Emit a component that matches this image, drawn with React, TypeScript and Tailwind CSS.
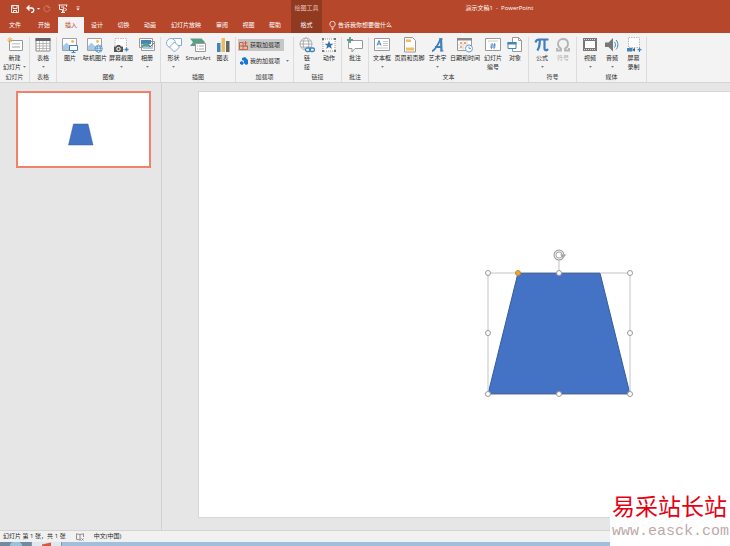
import { ReactNode } from "react"
import clsx from "clsx"

const tabs = [
    { name: "文件", width: "w-[30px]" },
    { name: "开始", width: "w-7" },
    { name: "插入", width: "w-[26px]", active: true },
    { name: "设计", width: "w-[26px]" },
    { name: "切换", width: "w-[27px]" },
    { name: "动画", width: "w-[26px]" },
    { name: "幻灯片放映", width: "w-[46px]" },
    { name: "审阅", width: "w-[26px]" },
    { name: "视图", width: "w-[27px]" },
    { name: "帮助", width: "w-[26px]" },
]

function Icon({ children }: { children: ReactNode }) {
    return (
        <svg viewBox="0 0 16 16" className="size-4 shrink-0" fill="none" aria-hidden="true">
            {children}
        </svg>
    )
}

function Caret() {
    return (
        <svg viewBox="0 0 3 2" className="w-[3px] h-0.5 shrink-0" aria-hidden="true">
            <path d="M0 0h3L1.5 1.8z" fill="#777" />
        </svg>
    )
}

interface ToolProps {
    icon: ReactNode
    lines: string[]
    width: string
    menu?: boolean
    disabled?: boolean
}

function Tool({ icon, lines, width, menu, disabled }: ToolProps) {
    return (
        <button
            type="button"
            disabled={disabled}
            className={clsx("flex flex-col items-center shrink-0 whitespace-nowrap", width, disabled ? "text-[#b1b1b1]" : "text-[#262626]")}
        >
            <Icon>{icon}</Icon>
            <span className="mt-px">{lines[0]}</span>
            <span className="flex items-center gap-0.5 h-2">
                {lines[1]}
                {menu && <Caret />}
            </span>
        </button>
    )
}

function Group({ label, width, children }: { label: string; width: string; children: ReactNode }) {
    return (
        <section className={clsx("flex flex-col shrink-0 border-r border-[#dcdcdc]", width)} aria-label={label}>
            <div className="flex shrink-0 h-9">{children}</div>
            <div className="text-center text-[#333]">{label}</div>
        </section>
    )
}

const picture = (
    <>
        <path d="M.5 1.5h14v12H.5z" fill="#fff" stroke="#a0a0a0" />
        <circle cx="10.5" cy="4.5" r="1.4" fill="#eebb55" />
        <path d="M1 13V9l3.5-3.5L9 10l1.5-1 3.5 4z" fill="#a9c8e4" />
    </>
)

const globe = (
    <>
        <circle cx="7" cy="7" r="6" />
        <ellipse cx="7" cy="7" rx="2.8" ry="6" />
        <path d="M1 7h12M2 4h10M2 10h10" />
    </>
)

function QuickAccess() {
    return (
        <div className="flex items-center gap-[7px] pl-[11px] w-[291px]">
            <button type="button" aria-label="保存">
                <svg viewBox="0 0 8 8" className="size-2" fill="none" stroke="#fff">
                    <path d="M.5.5h7v7h-7zM2 .5v3h4v-3M2.5 7.5v-2h3v2" strokeWidth=".9" />
                </svg>
            </button>
            <button type="button" aria-label="撤消">
                <svg viewBox="0 0 14 8" className="w-3.5 h-2" fill="none" stroke="#fff">
                    <path d="M3.5.5L1 3l2.5 2.5M1 3h4.5a2 2 0 0 1 0 4.5H5" strokeWidth="1.3" />
                    <path d="M11 3h3l-1.5 1.8z" fill="#fff" stroke="none" />
                </svg>
            </button>
            <button type="button" aria-label="重复" className="-ml-1">
                <svg viewBox="0 0 8 8" className="size-2" fill="none" stroke="#d07a68">
                    <path d="M5.5 1.2A3 3 0 1 0 7 4M5 .3v2.4h2.5" />
                </svg>
            </button>
            <button type="button" aria-label="从头开始">
                <svg viewBox="0 0 10 9" className="w-2.5 h-[9px]" fill="none" stroke="#fff">
                    <path d="M.5 1h9M1.5 1v4.5h3M8.5 1v2M3 8.5h4M4.5 5.5v3M3 3h3" strokeWidth=".9" />
                    <path d="M5.5 3.5l3.5 2-3.5 2z" fill="#b7472a" strokeWidth=".7" />
                </svg>
            </button>
            <button type="button" aria-label="自定义快速访问工具栏" className="pl-px">
                <svg viewBox="0 0 4 5" className="w-1 h-[5px]">
                    <path d="M.5.5h3v.8h-3zM.3 2.5h3.4L2 4.5z" fill="#fff" />
                </svg>
            </button>
        </div>
    )
}

function Header() {
    return (
        <header className="bg-[#b7472a] text-white">
            <div className="relative flex h-[17px]">
                <QuickAccess />
                <div className="flex items-center justify-center w-[31px] bg-[#903a22] text-[#efc4b8]">绘图工具</div>
                <h1 className="absolute left-[68%] top-1 -translate-x-1/2 pl-1.5 whitespace-nowrap">演示文稿1 &nbsp;- &nbsp;PowerPoint</h1>
            </div>
            <nav className="flex h-4">
                {tabs.map((tab) => (
                    <button
                        key={tab.name}
                        type="button"
                        className={clsx("shrink-0 whitespace-nowrap", tab.width, tab.active && "bg-[#f3f3f3] text-[#b7472a]")}
                    >
                        {tab.name}
                    </button>
                ))}
                <button type="button" className="shrink-0 w-[31px] ml-[3px] bg-[#903a22]">格式</button>
                <button type="button" className="flex items-center gap-0.5 ml-[7px] whitespace-nowrap">
                    <svg viewBox="0 0 7 9" className="w-[7px] h-[9px]" fill="none" stroke="#fff" strokeWidth=".8">
                        <path d="M2.3 6C2 5 .8 4.5.8 3a2.7 2.7 0 0 1 5.4 0c0 1.5-1.2 2-1.5 3zM2.5 7.3h2M2.8 8.5h1.4" />
                    </svg>
                    告诉我你想要做什么
                </button>
            </nav>
        </header>
    )
}

function Ribbon() {
    return (
        <div className="flex pt-1 bg-[#f3f3f3] border-b border-[#d4d4d4] overflow-hidden">
            <Group label="幻灯片" width="w-[30px]">
                <Tool width="w-[29px]" lines={["新建", "幻灯片"]} menu icon={
                    <>
                        <path d="M2.5 3.5h13v10h-13z" fill="#fff" stroke="#999" />
                        <path d="M5 6h8v1.5H5zM5 9h8v2H5z" fill="#d0d0d0" />
                        <path d="M3 0v6M0 3h6M1 1l4 4M5 1L1 5" stroke="#e8b04a" strokeWidth=".8" />
                    </>
                } />
            </Group>
            <Group label="表格" width="w-[27px]">
                <Tool width="w-[26px]" lines={["表格"]} menu icon={
                    <>
                        <path d="M1 1.5h14V14H1z" fill="#fff" stroke="#888" />
                        <path d="M.5 1h15v3H.5z" fill="#666" />
                        <path d="M1 6.5h14M1 9h14M1 11.5h14M4.5 4v10M8 4v10M11.5 4v10" stroke="#aaa" strokeWidth=".8" />
                    </>
                } />
            </Group>
            <Group label="图像" width="w-[104px]">
                <Tool width="w-[26px]" lines={["图片"]} icon={
                    <>
                        {picture}
                        <path d="M7.5 8.5h8v5h-8zM11.5 13.5v2M9.5 15.5h4" fill="#fff" stroke="#4285bd" />
                    </>
                } />
                <Tool width="w-6" lines={["联机图片"]} icon={
                    <>
                        {picture}
                        <g transform="translate(7.5 7.5) scale(.6)" stroke="#4285bd" strokeWidth="1.2" fill="#fff">{globe}</g>
                    </>
                } />
                <Tool width="w-7" lines={["屏幕截图"]} menu icon={
                    <>
                        <path d="M2 1.5h11.5v11H2z" fill="#fff" stroke="#bbb" strokeDasharray="1.5 1" />
                        <path d="M1 9.5h2L4 8h3l1 1.5h2V15H1z" fill="#555" />
                        <circle cx="5.5" cy="12" r="1.7" stroke="#fff" />
                        <path d="M13.5 10.5v4M11.5 12.5h4" stroke="#4285bd" strokeWidth="1.4" />
                    </>
                } />
                <Tool width="w-6" lines={["相册"]} menu icon={
                    <>
                        <path d="M.5 1.5h13v9H.5zM2.5 4.5h13v9h-13z" fill="#fff" stroke="#999" />
                        <path d="M2 3h10v4H2z" fill="#4285bd" />
                        <path d="M3 8l4-2.5L11 8l1 2H3z" fill="#5c9e85" />
                        <path d="M4 9.5h10V12H4z" fill="#a9c8e4" />
                        <path d="M9 8l2 2 4-4" stroke="#777" />
                    </>
                } />
            </Group>
            <Group label="插图" width="w-[75px]">
                <Tool width="w-[25px]" lines={["形状"]} menu icon={
                    <g fill="#fff" stroke="#84abd3">
                        <path d="M6.5 1.5h9v7h-9z" />
                        <circle cx="5" cy="6" r="4.5" />
                        <path d="M8.5 5l5 5-5 5-5-5z" />
                    </g>
                } />
                <Tool width="w-6" lines={["SmartArt"]} icon={
                    <>
                        <path d="M0 1.5h11.5L15 5l-3 4H0l3-3.7z" fill="#5c9e85" />
                        <path d="M5.5 6.5h10v8h-10z" fill="#fff" stroke="#999" />
                        <path d="M7 9h1M9 9h5M7 12h1M9 12h5" stroke="#aaa" />
                    </>
                } />
                <Tool width="w-[25px]" lines={["图表"]} icon={
                    <>
                        <path d="M2 6h3.5v9H2z" fill="#4285bd" />
                        <path d="M6.5 1H10v14H6.5z" fill="#e9bd62" />
                        <path d="M11 4h3.5v11H11z" fill="#666" />
                    </>
                } />
            </Group>
            <Group label="加载项" width="w-[58px]">
                <div className="flex flex-col items-start gap-1 pt-0.5 pl-0.5 text-[#262626] whitespace-nowrap">
                    <button type="button" className="flex items-center gap-0.5 w-[46px] h-3 pl-px bg-[#c6c6c6]">
                        <svg viewBox="0 0 9 9" className="size-[9px]" fill="none" stroke="#d65532" strokeWidth=".9">
                            <path d="M.5 1.5H4v7H.5zM.5 5h8M4 5h4.5v3.5H4M6.5 0v4M4.5 2h4" />
                        </svg>
                        获取加载项
                    </button>
                    <button type="button" className="flex items-center gap-0.5 h-3 pl-0.5">
                        <svg viewBox="0 0 8 8" className="size-2" fill="#1976d2">
                            <path d="M2 1l3-1 3 3v4L6 8 4 6V4L2 3z" />
                            <path d="M0 5l2-1 2 2-1.500 2L0 7z" />
                        </svg>
                        我的加载项
                        <span className="flex pl-1"><Caret /></span>
                    </button>
                </div>
            </Group>
            <Group label="链接" width="w-12">
                <Tool width="w-[26px]" lines={["链", "接"]} icon={
                    <>
                        <g stroke="#999" strokeWidth=".8" fill="#fff">{globe}</g>
                        <rect x="6.5" y="11" width="5" height="3.5" rx="1.7" stroke="#4285bd" strokeWidth="1.3" fill="#fff" />
                        <rect x="10.5" y="11" width="5" height="3.5" rx="1.7" stroke="#4285bd" strokeWidth="1.3" />
                    </>
                } />
                <Tool width="w-[18px]" lines={["动作"]} icon={
                    <>
                        <path d="M2 2h12v12H2z" fill="#fff" stroke="#999" strokeDasharray="1 1" />
                        <path d="M1 1h2v2H1zM13 1h2v2h-2zM1 13h2v2H1zM13 13h2v2h-2z" fill="#777" />
                        <path d="M8 3.5l1.2 3.2h3.3L9.9 8.8l1 3.2L8 10.1 5.1 12l1-3.200-2.600-2.100h3.300z" fill="#3672b0" />
                    </>
                } />
            </Group>
            <Group label="批注" width="w-[27px]">
                <Tool width="w-[26px]" lines={["批注"]} icon={
                    <>
                        <path d="M1.5 3.5h14v8H8L5 15v-3.5H1.5z" fill="#fff" stroke="#999" />
                        <path d="M3 0v6M0 3h6" stroke="#5c9e85" strokeWidth="1.8" />
                    </>
                } />
            </Group>
            <Group label="文本" width="w-40">
                <Tool width="w-[26px]" lines={["文本框"]} menu icon={
                    <>
                        <path d="M.5 1.5h15v12H.5z" fill="#fff" stroke="#999" />
                        <path d="M3 8.5l2-5 2 5M3.5 7h3" stroke="#4285bd" />
                        <path d="M9 4.5h5M9 6.5h5M9 8.5h5M2.5 11H14" stroke="#bbb" strokeWidth=".8" />
                    </>
                } />
                <Tool width="w-[29px]" lines={["页眉和页脚"]} icon={
                    <>
                        <path d="M2.5.5h8l3 3V15h-11z" fill="#fff" stroke="#999" />
                        <path d="M4 2.5h5V5H4zM4 10.5h8v3H4z" fill="#f0be5a" />
                    </>
                } />
                <Tool width="w-[27px]" lines={["艺术字"]} menu icon={
                    <>
                        <path d="M2 14c2.500 0 7-8 8.500-12" stroke="#3f7fbe" strokeWidth="1.8" />
                        <path d="M11 1.5L11.5 14M5 10h6.5" stroke="#3f7fbe" strokeWidth="2.2" />
                        <path d="M9 1.8h3.5M10 14h3.5" stroke="#3f7fbe" strokeWidth="1.2" />
                    </>
                } />
                <Tool width="w-7" lines={["日期和时间"]} icon={
                    <>
                        <path d="M.5 1.5h14v12H.5z" fill="#fff" stroke="#999" />
                        <path d="M0 1h15v2.5H0z" fill="#888" />
                        <path d="M3 5h2v2H3zM7 5h2v2H7zM3 9h2v2H3z" fill="#f0a070" />
                        <path d="M1 8h13M1 11h13M6 3v10M10 3v10" stroke="#ccc" strokeWidth=".7" />
                        <circle cx="12" cy="11.5" r="3.5" fill="#fff" stroke="#6ea0d2" />
                        <path d="M12 9.5v2h2" stroke="#6ea0d2" />
                    </>
                } />
                <Tool width="w-7" lines={["幻灯片", "编号"]} icon={
                    <>
                        <path d="M.5 1.5h15v12H.5z" fill="#fff" stroke="#999" />
                        <path d="M3 4h10" stroke="#ccc" />
                        <path d="M7.2 6l-.8 6M9.7 6l-.8 6M5.5 8H11M5 10h5.5" stroke="#3f7fbe" strokeWidth=".8" />
                    </>
                } />
                <Tool width="w-4" lines={["对象"]} icon={
                    <>
                        <path d="M5.5.5h6l3 3v11h-9z" fill="#fff" stroke="#999" />
                        <path d="M11.5.5v3h3" stroke="#999" />
                        <path d="M1 5.5h8v6H1z" fill="#fff" stroke="#4285bd" />
                        <path d="M.5 5h9v2.5h-9z" fill="#4285bd" />
                    </>
                } />
            </Group>
            <Group label="符号" width="w-12">
                <Tool width="w-[26px]" lines={["公式"]} menu icon={
                    <path d="M1.5 5.5C2 3 3 2.5 5 2.5h9.5M5.8 3c0 5-.5 8-2.5 10.5M10.5 3v8.5c0 2 2 2.5 3.5.5" stroke="#3f7fbe" strokeWidth="2.2" />
                } />
                <Tool width="w-4" lines={["符号"]} disabled icon={
                    <path d="M2 11v2.5h4v-2C3.8 10.5 3 9 3 7c0-3 2-5 5-5s5 2 5 5c0 2-.8 3.500-3 4.500v2h4V11" stroke="#b3b3b3" strokeWidth="1.8" />
                } />
            </Group>
            <Group label="媒体" width="w-[70px]">
                <Tool width="w-[26px]" lines={["视频"]} menu icon={
                    <>
                        <path d="M1 1h14v13H1z" fill="#777" />
                        <path d="M3 4h10v7H3z" fill="#fff" />
                        <path d="M2 2.5h12M2 12.5h12" stroke="#ddd" strokeDasharray="1 1" />
                    </>
                } />
                <Tool width="w-[18px]" lines={["音频"]} menu icon={
                    <>
                        <path d="M1 5.5h3.5L9 1v13.5L4.5 10H1z" fill="#777" />
                        <path d="M10.5 5c1.3 1.5 1.3 4 0 5.5M12 3c2.5 2.5 2.5 7 0 9.5" stroke="#4285bd" />
                    </>
                } />
                <Tool width="w-[25px]" lines={["屏幕", "录制"]} icon={
                    <>
                        <path d="M2.5.5h11v10h-11z" fill="#fff" stroke="#bbb" strokeDasharray="1.5 1" />
                        <path d="M1 11h5.5v3.5H1z" fill="#4285bd" />
                        <path d="M7 12l2-1v3.5l-2-1z" fill="#555" />
                        <path d="M13.5 10.5V15M11.5 12.7h4" stroke="#4285bd" strokeWidth="1.2" />
                    </>
                } />
            </Group>
        </div>
    )
}

const handles = [[8, 26], [79, 26], [150, 26], [8, 86], [150, 86], [8, 147], [79, 147], [150, 147]]

function SelectedTrapezoid() {
    return (
        <svg viewBox="0 0 158 155" className="absolute left-[281px] top-[155px] w-[158px] h-[155px]" fill="none" role="img" aria-label="梯形">
            <path d="M38 26h82l30 121H8z" fill="#4472c4" stroke="#365c9e" />
            <path d="M8 26h142v121H8zM79 13v13" stroke="#c4c4c4" />
            <path d="M38 26.5h82M9 146.5h140" stroke="#4a68a5" />
            <circle cx="79" cy="8" r="4" stroke="#a3a3a3" strokeWidth="3" />
            <circle cx="79" cy="8" r="4" stroke="#fff" strokeWidth=".8" />
            <path d="M80 7.5h6.5L83 11z" fill="#a3a3a3" />
            {handles.map(([x, y]) => (
                <circle key={`${x}-${y}`} cx={x} cy={y} r="2.5" fill="#fff" stroke="#999" />
            ))}
            <circle cx="38" cy="26" r="2.5" fill="#f5a623" stroke="#b98a3a" />
        </svg>
    )
}

function Workspace() {
    return (
        <div className="flex flex-1 bg-[#e6e6e6]">
            <aside className="shrink-0 w-[162px] pt-2 pl-4 border-r border-[#d2d2d2]">
                <button type="button" aria-label="幻灯片 1" className="block w-[135px] h-[77px] bg-white border-2 border-[#f2816a]">
                    <svg viewBox="0 0 131 73" className="w-full h-full">
                        <path d="M55.5 31H70l5 21H50.5z" fill="#4472c4" stroke="#365c9e" strokeWidth=".5" />
                    </svg>
                </button>
            </aside>
            <main className="flex flex-1 min-w-0 pt-2 pb-3 pl-9">
                <div className="relative flex-1 overflow-hidden bg-white border border-r-0 border-[#d6d6d6]">
                    <SelectedTrapezoid />
                </div>
            </main>
        </div>
    )
}

function StatusBar() {
    return (
        <footer>
            <div className="flex items-center gap-2.5 h-3 pl-[3px] bg-[#f1f1f1] border-t border-[#d4d4d4] text-[#262626]">
                <span>幻灯片 第 1 张，共 1 张</span>
                <svg viewBox="0 0 8 8" className="size-2" fill="none" stroke="#777" strokeWidth=".8" aria-hidden="true">
                    <path d="M4 1.5L.5.8v5.5L4 7zM4 1.5L7.5.8V4M4 7l1-.3M5.5 5.5l2 2M7.5 5.5l-2 2" />
                </svg>
                <span>中文(中国)</span>
            </div>
            <div className="flex h-1 bg-[#a3bedb]">
                <div className="flex justify-center w-[31px] bg-[#7389a0]">
                    <div className="w-3 h-1 rounded-t-full bg-[#9cc3dc]" />
                </div>
                <div className="flex justify-center w-[31px] bg-[#dfe7ef] border-x border-[#8295ab]">
                    <svg viewBox="0 0 10 4" className="w-2.5 h-1" aria-hidden="true">
                        <path d="M0 2.5L9 .5V4H0z" fill="#d65a3e" />
                    </svg>
                </div>
            </div>
        </footer>
    )
}

export default function App() {
    return (
        <div className="relative flex flex-col min-h-screen overflow-hidden text-[6px] leading-[9px] font-['Open_Sans','Noto_Sans_CJK_SC',sans-serif]">
            <Header />
            <Ribbon />
            <Workspace />
            <StatusBar />
            <div className="absolute right-0 bottom-0 w-[120px] bg-white whitespace-nowrap">
                <p className="pl-0.5 text-[23px] leading-7 text-[#e60012]">易采站长站</p>
                <p className="pl-0.5 pb-0.5 text-[15px] leading-6 text-[#bda9a9] font-['Liberation_Mono',monospace]">www.easck.com</p>
            </div>
        </div>
    )
}
